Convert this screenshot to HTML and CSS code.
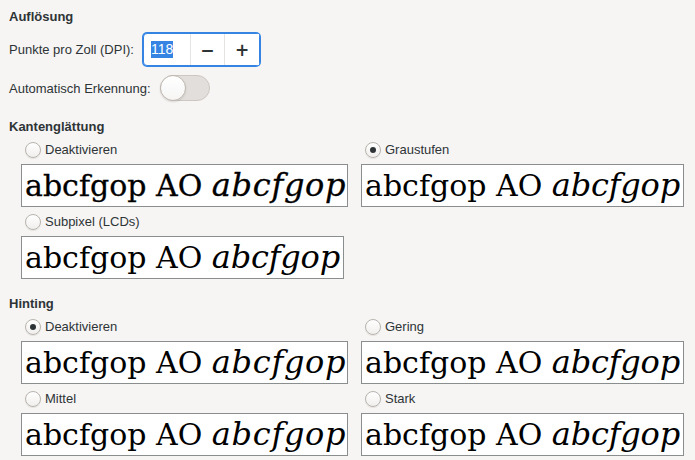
FILE: index.html
```html
<!DOCTYPE html>
<html lang="de">

<head>
    <meta charset="UTF-8">
    <meta name="viewport" content="width=device-width, initial-scale=1.0">
    <title>Schriften</title>
    <link rel="stylesheet" href="styles.css">
</head>

<body>

    <h3 class="section">Auflösung</h3>

    <div class="row dpi-row">
        <label for="dpi">Punkte pro Zoll (DPI):</label>
        <div class="spin">
            <span class="spin-entry"><span class="selected">118</span></span>
            <button class="spin-btn">&minus;</button>
            <button class="spin-btn">+</button>
        </div>
    </div>

    <div class="row auto-row">
        <label>Automatisch Erkennung:</label>
        <span class="switch"><span class="knob"></span></span>
    </div>

    <h3 class="section section-aa">Kantenglättung</h3>

    <div class="options">
        <div class="option">
            <div class="radio-row"><span class="radio"></span>Deaktivieren</div>
            <div class="preview mono">abcfgop AO <i>abcfgop</i></div>
        </div>
        <div class="option">
            <div class="radio-row"><span class="radio checked"></span>Graustufen</div>
            <div class="preview tight">abcfgop AO <i>abcfgop</i></div>
        </div>
        <div class="option">
            <div class="radio-row"><span class="radio"></span>Subpixel (LCDs)</div>
            <div class="preview tight">abcfgop AO <i>abcfgop</i></div>
        </div>
    </div>

    <h3 class="section section-hint">Hinting</h3>

    <div class="options">
        <div class="option">
            <div class="radio-row"><span class="radio checked"></span>Deaktivieren</div>
            <div class="preview">abcfgop AO <i>abcfgop</i></div>
        </div>
        <div class="option">
            <div class="radio-row"><span class="radio"></span>Gering</div>
            <div class="preview tight">abcfgop AO <i>abcfgop</i></div>
        </div>
        <div class="option">
            <div class="radio-row"><span class="radio"></span>Mittel</div>
            <div class="preview">abcfgop AO <i>abcfgop</i></div>
        </div>
        <div class="option">
            <div class="radio-row"><span class="radio"></span>Stark</div>
            <div class="preview tight">abcfgop AO <i>abcfgop</i></div>
        </div>
    </div>

</body>

</html>
```

FILE: styles.css
```css
body {
    margin: 0;
    padding: 8px 9px;
    background-color: #f6f5f4;
    color: #2e3436;
    font-family: "Liberation Sans", Arial, sans-serif;
    font-size: 13px;
    overflow: hidden;
}

.section {
    margin: 0;
    font-size: 13px;
    font-weight: bold;
    line-height: 18px;
}

.section-aa {
    margin-top: 17px;
}

.section-hint {
    margin-top: 16px;
}

.row {
    display: flex;
    align-items: center;
    gap: 8px;
}

.dpi-row {
    margin-top: 7px;
}

.auto-row {
    margin-top: 9px;
}

/* spin button, focused */
.spin {
    display: flex;
    height: 31px;
    width: 115px;
    border: 1px solid #3584e4;
    box-shadow: 0 0 0 1px #3584e4;
    border-radius: 4px;
    background-color: #fff;
    margin-left: 1px;
}

.spin-entry {
    display: flex;
    align-items: center;
    width: 46px;
    padding-left: 7px;
    box-sizing: border-box;
    font-size: 14px;
}

.selected {
    background-color: #3584e4;
    color: #fff;
    line-height: 17px;
}

.spin-btn {
    width: 35px;
    border: none;
    border-left: 1px solid #e6e4e2;
    background: #fff;
    color: #2e3436;
    font-family: "DejaVu Sans", sans-serif;
    font-size: 17px;
    font-weight: bold;
    padding: 0;
}

/* switch, off */
.switch {
    position: relative;
    display: inline-block;
    width: 48px;
    height: 24px;
    border: 1px solid #cdc7c2;
    border-radius: 13px;
    background-color: #e1dedb;
    margin-left: 1px;
}

.knob {
    position: absolute;
    left: -1px;
    top: -1px;
    width: 24px;
    height: 24px;
    border: 1px solid #bfb8b1;
    border-radius: 50%;
    background: linear-gradient(#fff, #f6f5f4);
    box-shadow: 0 1px 2px rgba(0, 0, 0, 0.12);
}

.options {
    display: grid;
    grid-template-columns: 340px 340px;
    row-gap: 4px;
    margin-top: 3px;
    margin-left: 12px;
}

.option {
    display: flex;
    flex-direction: column;
    align-items: flex-start;
    gap: 4px;
}

.radio-row {
    display: flex;
    align-items: center;
    height: 21px;
    padding-left: 4px;
    font-size: 13px;
}

.radio {
    position: relative;
    width: 14px;
    height: 14px;
    margin-right: 4px;
    border: 1px solid #b8b3ad;
    border-radius: 50%;
    background: linear-gradient(#fff, #f1efed);
    box-shadow: 0 1px 1px rgba(0, 0, 0, 0.08);
}

.radio.checked::after {
    content: "";
    position: absolute;
    left: 4px;
    top: 4px;
    width: 6px;
    height: 6px;
    border-radius: 50%;
    background-color: #2e3436;
}

.preview {
    box-sizing: border-box;
    width: 327px;
    height: 43px;
    padding: 0 0 0 3px;
    border: 1px solid #8b8e8f;
    background-color: #fff;
    color: #000;
    font-family: "DejaVu Serif", serif;
    font-size: 30px;
    line-height: 41px;
    white-space: nowrap;
    overflow: hidden;
}

.preview i {
    font-size: 32px;
    letter-spacing: 0.7px;
}

.preview.tight {
    width: 323px;
}

.preview.tight i {
    letter-spacing: -0.2px;
}

/* antialiasing off: heavier, crisp strokes */
.preview.mono {
    -webkit-text-stroke: 0.3px #000;
}
```
